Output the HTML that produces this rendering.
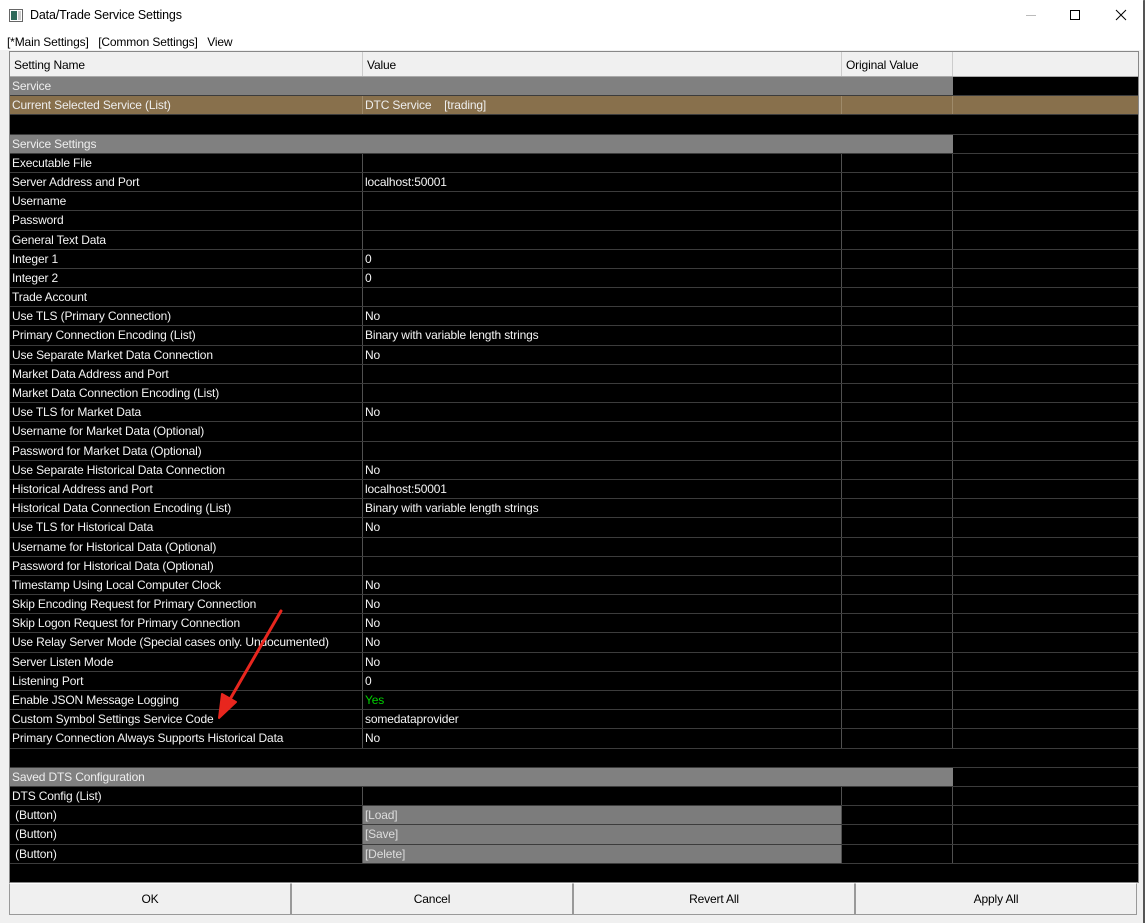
<!DOCTYPE html>
<html><head><meta charset="utf-8"><style>
*{box-sizing:border-box;margin:0;padding:0}
body{width:1145px;height:923px;background:#f0f0f0;font-family:"Liberation Sans",sans-serif;font-size:12px;letter-spacing:-0.15px;position:relative;overflow:hidden}
.win{position:absolute;left:0;top:0;width:1145px;height:923px;border-right:2px solid #555;border-top:1px solid #777}
.title{position:absolute;left:0;top:0;width:1143px;height:50px;background:#fff}
.title .t{position:absolute;left:30px;top:8px;font-size:12.5px;color:#000}
.menu{position:absolute;left:7px;top:35px;color:#000}
.grid{position:absolute;left:9px;top:51px;width:1130px;height:832px;background:#000;border:1px solid #888}
.hdr{height:25px;background:#f0f0f0;display:flex;border-bottom:1px solid #aaa}
.hdr div{padding:6px 4px 0;color:#000;border-right:1px solid #ccc}
.r{height:19.2px;display:flex;color:#f4f4f4;border-bottom:1px solid #3c3c3c;line-height:19px}
.r div{padding-left:2px;border-right:1px solid #505050;white-space:nowrap;overflow:hidden}
.c1{width:353px}.c2{width:479px}.c3{width:111px}.c4{flex:1;border-right:none!important}
.sec .c1,.sec .c2,.sec .c3{background:#808080;border-right:none!important;color:#eee}
.sel div{background:#88704c;border-right:1px solid #9e8a6a;color:#eee}
.blank div{border-right:none!important}
.btn .c2{background:#7c7c7c;color:#ddd}
.btns{position:absolute;left:9px;top:883px;width:1128px;height:32px;display:flex}
.btns div{flex:1;border:1px solid #999;border-top:1px solid #fff;background:#f0f0f0;text-align:center;line-height:30px;color:#000}
</style></head><body>
<div class="win"></div>
<div class="title">
<svg style="position:absolute;left:9px;top:9px" width="14" height="13"><rect x="0.5" y="0.5" width="13" height="12" fill="#fff" stroke="#666"/><rect x="2" y="2" width="6" height="9" fill="#2f6a5a"/><rect x="9" y="2" width="3" height="9" fill="#ccc"/></svg>
<span class="t">Data/Trade Service Settings</span>
<div style="position:absolute;left:1026px;top:15px;width:10px;height:1px;background:#bbb"></div>
<div style="position:absolute;left:1070px;top:10px;width:10px;height:10px;border:1px solid #000"></div>
<svg style="position:absolute;left:1115px;top:9px" width="12" height="12"><path d="M1 1L11 11M11 1L1 11" stroke="#000" stroke-width="1"/></svg>
<div class="menu">[*Main Settings]&nbsp;&nbsp;&nbsp;[Common Settings]&nbsp;&nbsp;&nbsp;View</div>
</div>
<div class="grid">
<div class="hdr"><div class="c1" style="width:353px">Setting Name</div><div style="width:479px">Value</div><div style="width:111px">Original Value</div><div style="flex:1;border:none"></div></div>
<div class="r sec"><div class="c1">Service</div><div class="c2"></div><div class="c3"></div><div class="c4"></div></div>
<div class="r sel"><div class="c1">Current Selected Service (List)</div><div class="c2">DTC Service &nbsp;&nbsp;&nbsp;[trading]</div><div class="c3"></div><div class="c4"></div></div>
<div class="r blank"><div class="c1"></div><div class="c2"></div><div class="c3"></div><div class="c4"></div></div>
<div class="r sec"><div class="c1">Service Settings</div><div class="c2"></div><div class="c3"></div><div class="c4"></div></div>
<div class="r"><div class="c1">Executable File</div><div class="c2"></div><div class="c3"></div><div class="c4"></div></div>
<div class="r"><div class="c1">Server Address and Port</div><div class="c2">localhost:50001</div><div class="c3"></div><div class="c4"></div></div>
<div class="r"><div class="c1">Username</div><div class="c2"></div><div class="c3"></div><div class="c4"></div></div>
<div class="r"><div class="c1">Password</div><div class="c2"></div><div class="c3"></div><div class="c4"></div></div>
<div class="r"><div class="c1">General Text Data</div><div class="c2"></div><div class="c3"></div><div class="c4"></div></div>
<div class="r"><div class="c1">Integer 1</div><div class="c2">0</div><div class="c3"></div><div class="c4"></div></div>
<div class="r"><div class="c1">Integer 2</div><div class="c2">0</div><div class="c3"></div><div class="c4"></div></div>
<div class="r"><div class="c1">Trade Account</div><div class="c2"></div><div class="c3"></div><div class="c4"></div></div>
<div class="r"><div class="c1">Use TLS (Primary Connection)</div><div class="c2">No</div><div class="c3"></div><div class="c4"></div></div>
<div class="r"><div class="c1">Primary Connection Encoding (List)</div><div class="c2">Binary with variable length strings</div><div class="c3"></div><div class="c4"></div></div>
<div class="r"><div class="c1">Use Separate Market Data Connection</div><div class="c2">No</div><div class="c3"></div><div class="c4"></div></div>
<div class="r"><div class="c1">Market Data Address and Port</div><div class="c2"></div><div class="c3"></div><div class="c4"></div></div>
<div class="r"><div class="c1">Market Data Connection Encoding (List)</div><div class="c2"></div><div class="c3"></div><div class="c4"></div></div>
<div class="r"><div class="c1">Use TLS for Market Data</div><div class="c2">No</div><div class="c3"></div><div class="c4"></div></div>
<div class="r"><div class="c1">Username for Market Data (Optional)</div><div class="c2"></div><div class="c3"></div><div class="c4"></div></div>
<div class="r"><div class="c1">Password for Market Data (Optional)</div><div class="c2"></div><div class="c3"></div><div class="c4"></div></div>
<div class="r"><div class="c1">Use Separate Historical Data Connection</div><div class="c2">No</div><div class="c3"></div><div class="c4"></div></div>
<div class="r"><div class="c1">Historical Address and Port</div><div class="c2">localhost:50001</div><div class="c3"></div><div class="c4"></div></div>
<div class="r"><div class="c1">Historical Data Connection Encoding (List)</div><div class="c2">Binary with variable length strings</div><div class="c3"></div><div class="c4"></div></div>
<div class="r"><div class="c1">Use TLS for Historical Data</div><div class="c2">No</div><div class="c3"></div><div class="c4"></div></div>
<div class="r"><div class="c1">Username for Historical Data (Optional)</div><div class="c2"></div><div class="c3"></div><div class="c4"></div></div>
<div class="r"><div class="c1">Password for Historical Data (Optional)</div><div class="c2"></div><div class="c3"></div><div class="c4"></div></div>
<div class="r"><div class="c1">Timestamp Using Local Computer Clock</div><div class="c2">No</div><div class="c3"></div><div class="c4"></div></div>
<div class="r"><div class="c1">Skip Encoding Request for Primary Connection</div><div class="c2">No</div><div class="c3"></div><div class="c4"></div></div>
<div class="r"><div class="c1">Skip Logon Request for Primary Connection</div><div class="c2">No</div><div class="c3"></div><div class="c4"></div></div>
<div class="r"><div class="c1">Use Relay Server Mode (Special cases only. Undocumented)</div><div class="c2">No</div><div class="c3"></div><div class="c4"></div></div>
<div class="r"><div class="c1">Server Listen Mode</div><div class="c2">No</div><div class="c3"></div><div class="c4"></div></div>
<div class="r"><div class="c1">Listening Port</div><div class="c2">0</div><div class="c3"></div><div class="c4"></div></div>
<div class="r"><div class="c1">Enable JSON Message Logging</div><div class="c2" style="color:#00d000">Yes</div><div class="c3"></div><div class="c4"></div></div>
<div class="r"><div class="c1">Custom Symbol Settings Service Code</div><div class="c2">somedataprovider</div><div class="c3"></div><div class="c4"></div></div>
<div class="r"><div class="c1">Primary Connection Always Supports Historical Data</div><div class="c2">No</div><div class="c3"></div><div class="c4"></div></div>
<div class="r blank"><div class="c1"></div><div class="c2"></div><div class="c3"></div><div class="c4"></div></div>
<div class="r sec"><div class="c1">Saved DTS Configuration</div><div class="c2"></div><div class="c3"></div><div class="c4"></div></div>
<div class="r"><div class="c1">DTS Config (List)</div><div class="c2"></div><div class="c3"></div><div class="c4"></div></div>
<div class="r btn"><div class="c1">&nbsp;(Button)</div><div class="c2">[Load]</div><div class="c3"></div><div class="c4"></div></div>
<div class="r btn"><div class="c1">&nbsp;(Button)</div><div class="c2">[Save]</div><div class="c3"></div><div class="c4"></div></div>
<div class="r btn"><div class="c1">&nbsp;(Button)</div><div class="c2">[Delete]</div><div class="c3"></div><div class="c4"></div></div>
</div>
<div class="btns"><div>OK</div><div>Cancel</div><div>Revert All</div><div>Apply All</div></div>
<svg style="position:absolute;left:0;top:0" width="1145" height="923"><path d="M281 611L229 701" stroke="#e8261e" stroke-width="3" stroke-linecap="round"/><path d="M219 718L222 694L236 702Z" fill="#e8261e" stroke="#e8261e" stroke-width="2" stroke-linejoin="round"/></svg>
</body></html>
